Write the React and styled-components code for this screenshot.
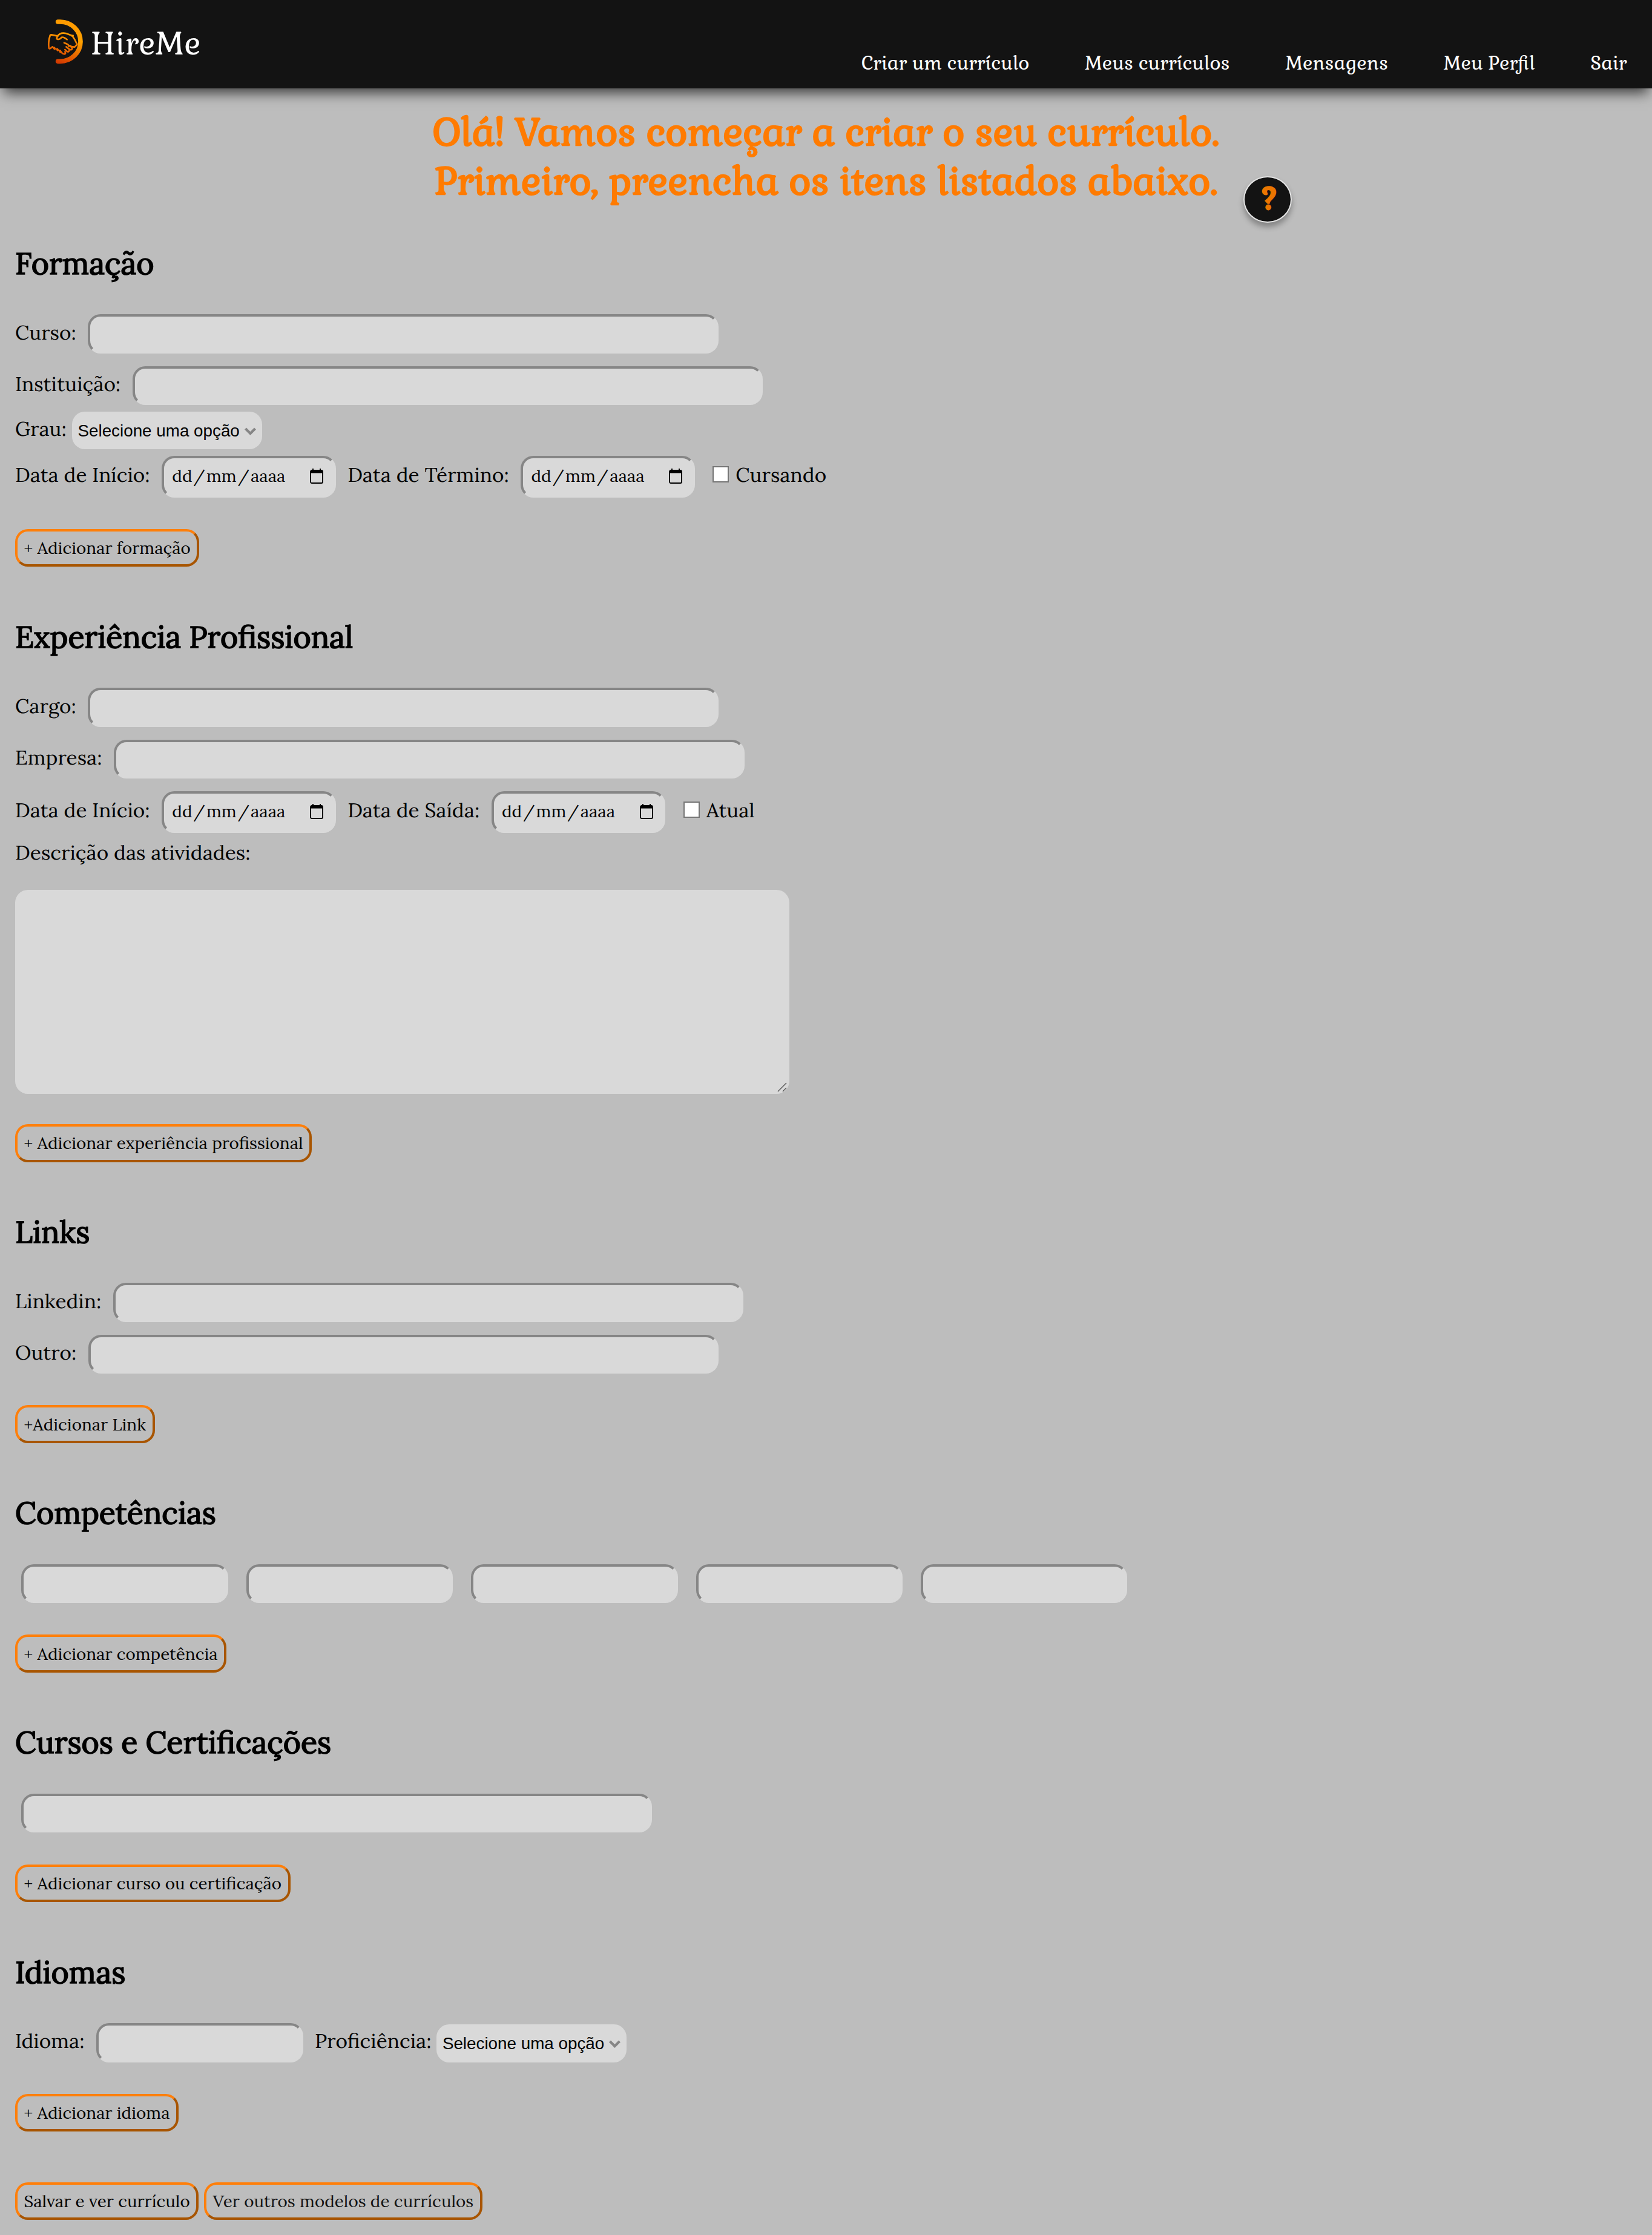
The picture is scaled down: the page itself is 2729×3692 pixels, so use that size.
import React from "react";
import styled, { createGlobalStyle } from "styled-components";

const display = `Gabriela, "Liberation Serif", serif`;
const body = `Lora, "Liberation Serif", serif`;

const GlobalStyle = createGlobalStyle`
  * { box-sizing: border-box; }
  body { margin: 0; background: #bdbdbd; color: #000; font-family: ${body}; }
`;

const Page = styled.div`
  min-height: 3692px;
  overflow: hidden;
`;

const Header = styled.header`
  display: flex;
  justify-content: space-between;
  height: 145.8px;
  padding: 0 41.5px 0 70px;
  background: #131313;
  color: #fff;
  font-family: ${display};
  box-shadow: 0 13px 21px -6px rgba(0, 0, 0, 0.7);
`;

const Brand = styled.a`
  display: flex;
  align-items: flex-start;
  padding-top: 20px;
  font-size: 51.8px;
  line-height: 66px;
`;

const BrandName = styled.span`
  margin: 19px 0 0 0;
`;

const Nav = styled.nav`
  display: flex;
  gap: 91.6px;
  padding-top: 84px;
  font-size: 31.25px;
  line-height: 40px;
  white-space: nowrap;
`;

const TitleRow = styled.div`
  display: grid;
  grid-template-columns: 1fr auto 1fr;
  height: 225.3px;
  margin-top: 31.8px;
`;

const Title = styled.h1`
  grid-column: 2;
  margin: 0;
  color: #ff7b00;
  font-family: ${display};
  font-size: 62.5px;
  font-weight: 400;
  line-height: 81px;
  text-align: center;
  white-space: nowrap;
  -webkit-text-stroke: 2.4px #ff7b00;
`;

const HelpButton = styled.button`
  display: flex;
  align-items: center;
  justify-content: center;
  width: 80px;
  height: 77px;
  margin: 113px 0 0 39.5px;
  padding: 2px 0 0 6px;
  border: 2px solid #e4e4e4;
  border-radius: 50%;
  background: #131313;
  color: #ea7500;
  font-family: ${display};
  font-size: 46px;
  line-height: 60px;
  -webkit-text-stroke: 4px #ea7500;
  box-shadow: 0 7px 10px rgba(0, 0, 0, 0.3);
`;

const Form = styled.form`
  padding: 0 25px;
`;

const Section = styled.section`
  margin-bottom: 83.3px;
`;

const SectionTitle = styled.h2`
  margin: 0 0 52.5px;
  font-size: 50px;
  font-weight: 400;
  line-height: 64px;
  -webkit-text-stroke: 1.7px #000;
`;

const Row = styled.div`
  display: flex;
  align-items: center;
  height: ${(p) => p.$h || 64.6}px;
  margin-top: ${(p) => p.$mt || 0}px;
`;

const Label = styled.label`
  padding-bottom: 6px;
  font-size: 33.33px;
  line-height: 42px;
  white-space: nowrap;
`;

const TextInput = styled.input`
  width: ${(p) => (p.$short ? 341.5 : 1041.5)}px;
  height: 64.6px;
  margin: 0 19.5px;
  padding: 0 12px;
  border: 4px solid;
  border-color: #868686 #d9d9d9 #d9d9d9 #868686;
  border-radius: 21px;
  outline: none;
  background: #d9d9d9;
  font: 27.8px ${body};
`;

const SkillList = styled.div`
  display: flex;
  gap: 29.9px;
  padding-left: 10.4px;

  ${TextInput} { margin: 0; }
`;

const Indented = styled.div`
  padding-left: 10.4px;

  ${TextInput} { margin: 0; display: block; }
`;

const DateBox = styled.div`
  display: flex;
  align-items: center;
  gap: 2.1px;
  width: 287.3px;
  height: 68.8px;
  margin: 0 19.6px;
  padding: 0 16.5px 2px 13px;
  border: 4px solid;
  border-color: #868686 #d9d9d9 #d9d9d9 #868686;
  border-radius: 21px;
  background: #d9d9d9;
  font-size: 27.8px;
  line-height: 36px;

  svg { margin-left: auto; }
`;

const SelectBox = styled.div`
  display: flex;
  align-items: center;
  justify-content: space-between;
  width: 314px;
  height: 62.7px;
  margin: ${(p) => p.$mt || 0}px 0 0 ${(p) => p.$ml}px;
  padding: 2px 10px 0 9.5px;
  border-radius: 21px;
  background: #d9d9d9;
  font: 27.8px "Liberation Sans", sans-serif;
  white-space: nowrap;
`;

const Check = styled.span`
  width: 27px;
  height: 27px;
  margin: 0 11px 8.5px 10px;
  border: 2px solid #767676;
  background: #fff;
`;

const TextArea = styled.div`
  display: flex;
  align-items: flex-end;
  justify-content: flex-end;
  width: 1279px;
  height: 337px;
  margin-top: 38px;
  padding: 0 4px 3px 0;
  border-radius: 21px;
  background: #d9d9d9;
`;

const ActionButton = styled.button`
  display: flex;
  align-items: center;
  justify-content: center;
  width: fit-content;
  height: 62.7px;
  margin-top: ${(p) => p.$mt || 0}px;
  padding: 0 10.5px;
  border: 4px solid;
  border-color: #ff7f0a #a85500 #a85500 #ff7f0a;
  border-radius: 21px;
  background: transparent;
  color: ${(p) => (p.$soft ? "#131313" : "#000")};
  font: 27.8px/36px ${body};
  white-space: nowrap;
`;

const Actions = styled.div`
  display: flex;
  gap: 9px;
`;

function Logo() {
  return (
    <svg width="80" height="95" viewBox="0 0 240 285" fill="none" strokeLinecap="round" strokeLinejoin="round">
      <defs>
        <linearGradient id="ring" gradientUnits="userSpaceOnUse" x1="150" y1="40" x2="80" y2="250">
          <stop offset="0" stopColor="#ff9900" />
          <stop offset="0.4" stopColor="#ffa200" />
          <stop offset="1" stopColor="#d43a00" />
        </linearGradient>
        <linearGradient id="hands" gradientUnits="userSpaceOnUse" x1="110" y1="95" x2="90" y2="215">
          <stop offset="0" stopColor="#ffa200" />
          <stop offset="1" stopColor="#e25300" />
        </linearGradient>
      </defs>
      <path d="M77 48H88A101 98 0 0 1 88 244H77" stroke="url(#ring)" strokeWidth="23" />
      <g stroke="url(#hands)" strokeWidth="8">
        <path d="M74 118L44 112Q39 112 38 117Q28 146 32 178Q34 184 40 180L50 172" />
        <path d="M74 120Q90 98 118 106L148 117Q162 136 172 160L160 173Q146 174 134 166" />
        <path d="M76 120Q64 134 80 135Q90 134 95 125Q106 122 122 136M146 118L152 116" />
        <path d="M108 152L119 157Q134 164 131 170M118 172L135 185Q146 190 148 180Q144 172 136 166M112 186L122 195Q132 200 133 189M94 198Q99 208 110 208Q118 206 112 197" />
      </g>
      <path d="M57 177L61 181M73 184L76 188M87 192L90 197" stroke="url(#hands)" strokeWidth="12" />
    </svg>
  );
}

function CalendarIcon() {
  return (
    <svg width="22" height="25" viewBox="0 0 22 25">
      <path d="M3 3h16a2 2 0 0 1 2 2v17a2 2 0 0 1-2 2H3a2 2 0 0 1-2-2V5a2 2 0 0 1 2-2z" fill="none" stroke="#000" strokeWidth="1.8" />
      <path d="M1 3h20v4.5H1zM4 0h2v4H4zM16 0h2v4h-2z" />
    </svg>
  );
}

function DateField() {
  return (
    <DateBox>
      <span>dd</span>
      <span>/</span>
      <span>mm</span>
      <span>/</span>
      <span>aaaa</span>
      <CalendarIcon />
    </DateBox>
  );
}

function SelectField({ ml, mt }) {
  return (
    <SelectBox $ml={ml} $mt={mt}>
      Selecione uma opção
      <svg width="19" height="13" viewBox="0 0 19 13" fill="none">
        <path d="M1.5 2L9.5 10L17.5 2" stroke="#868686" strokeWidth="4.2" />
      </svg>
    </SelectBox>
  );
}

const navItems = ["Criar um currículo", "Meus currículos", "Mensagens", "Meu Perfil", "Sair"];

export default function App() {
  return (
    <Page>
      <GlobalStyle />
      <Header>
        <Brand>
          <Logo />
          <BrandName>HireMe</BrandName>
        </Brand>
        <Nav>
          {navItems.map((item) => (
            <a key={item}>{item}</a>
          ))}
        </Nav>
      </Header>

      <TitleRow>
        <Title>
          Olá! Vamos começar a criar o seu currículo.
          <br />
          Primeiro, preencha os itens listados abaixo.
        </Title>
        <HelpButton>?</HelpButton>
      </TitleRow>

      <Form>
        <Section>
          <SectionTitle>Formação</SectionTitle>
          <Row>
            <Label>Curso:</Label>
            <TextInput />
          </Row>
          <Row $mt={20.7}>
            <Label>Instituição:</Label>
            <TextInput />
          </Row>
          <Row $mt={10.4} $h={62.7}>
            <Label>Grau:</Label>
            <SelectField ml={9.2} />
          </Row>
          <Row $mt={10.6} $h={68.8}>
            <Label>Data de Início:</Label>
            <DateField />
            <Label>Data de Término:</Label>
            <DateField />
            <Check />
            <Label>Cursando</Label>
          </Row>
          <ActionButton type="button" $mt={52}>+ Adicionar formação</ActionButton>
        </Section>

        <Section>
          <SectionTitle>Experiência Profissional</SectionTitle>
          <Row>
            <Label>Cargo:</Label>
            <TextInput />
          </Row>
          <Row $mt={20.7}>
            <Label>Empresa:</Label>
            <TextInput />
          </Row>
          <Row $mt={20.9} $h={68.8}>
            <Label>Data de Início:</Label>
            <DateField />
            <Label>Data de Saída:</Label>
            <DateField />
            <Check />
            <Label>Atual</Label>
          </Row>
          <Row $mt={13.5} $h={42.6}>
            <Label>Descrição das atividades:</Label>
          </Row>
          <TextArea>
            <svg width="16" height="16" viewBox="0 0 16 16" stroke="#555" strokeWidth="1.4">
              <path d="M1 15L15 1M9 15L15 9" />
            </svg>
          </TextArea>
          <ActionButton type="button" $mt={50}>+ Adicionar experiência profissional</ActionButton>
        </Section>

        <Section>
          <SectionTitle>Links</SectionTitle>
          <Row>
            <Label>Linkedin:</Label>
            <TextInput />
          </Row>
          <Row $mt={20.7}>
            <Label>Outro:</Label>
            <TextInput />
          </Row>
          <ActionButton type="button" $mt={52}>+Adicionar Link</ActionButton>
        </Section>

        <Section>
          <SectionTitle>Competências</SectionTitle>
          <SkillList>
            {[0, 1, 2, 3, 4].map((n) => (
              <TextInput key={n} $short />
            ))}
          </SkillList>
          <ActionButton type="button" $mt={52.1}>+ Adicionar competência</ActionButton>
        </Section>

        <Section>
          <SectionTitle>Cursos e Certificações</SectionTitle>
          <Indented>
            <TextInput />
          </Indented>
          <ActionButton type="button" $mt={52.1}>+ Adicionar curso ou certificação</ActionButton>
        </Section>

        <Section>
          <SectionTitle>Idiomas</SectionTitle>
          <Row>
            <Label>Idioma:</Label>
            <TextInput $short />
            <Label>Proficiência:</Label>
            <SelectField ml={8.8} mt={2} />
          </Row>
          <ActionButton type="button" $mt={52.1}>+ Adicionar idioma</ActionButton>
        </Section>

        <Actions>
          <ActionButton type="button">Salvar e ver currículo</ActionButton>
          <ActionButton type="button" $soft>Ver outros modelos de currículos</ActionButton>
        </Actions>
      </Form>
    </Page>
  );
}
